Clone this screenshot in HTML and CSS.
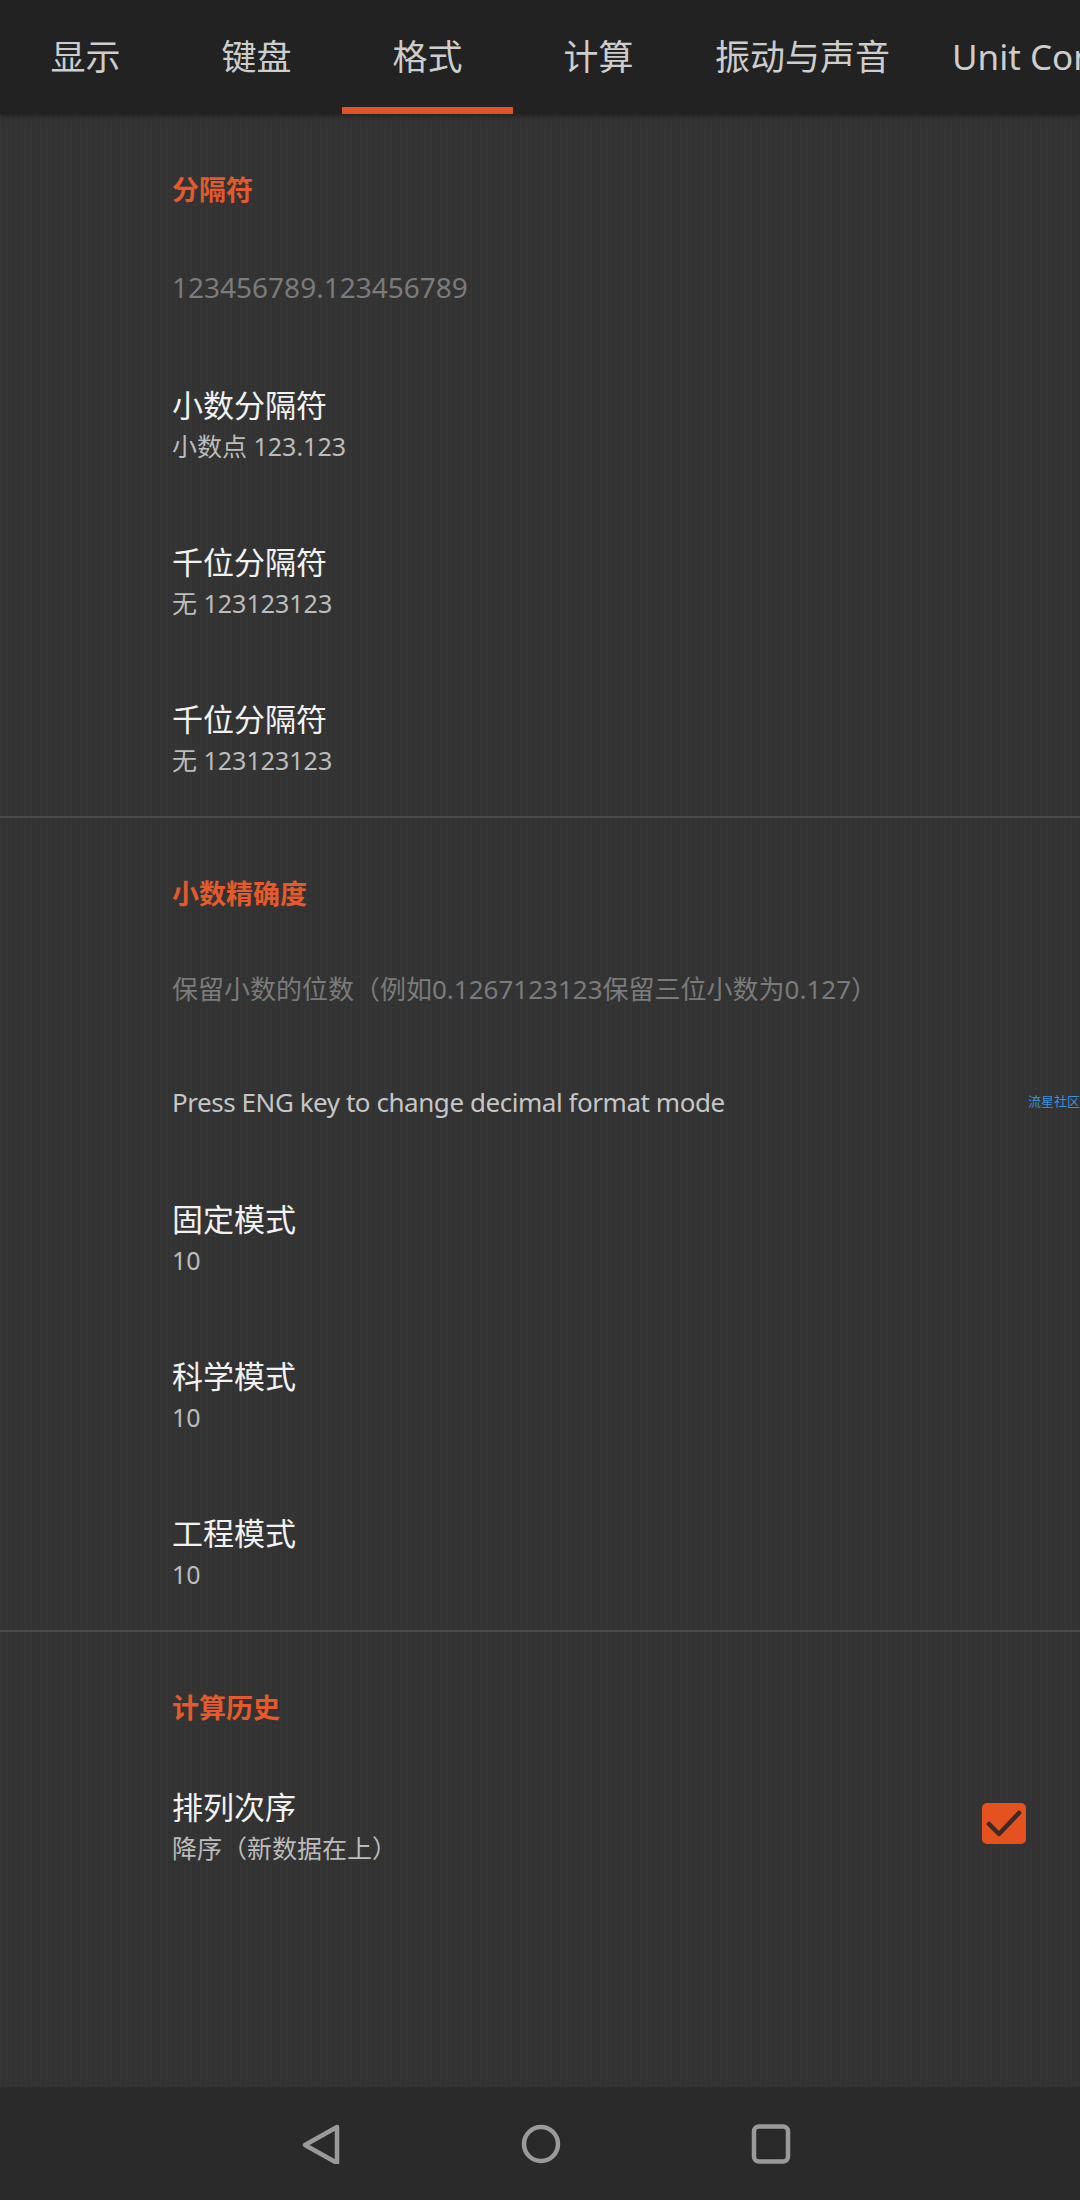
FILE: index.html
```html
<!DOCTYPE html>
<html lang="zh-CN">
  <head>
    <meta charset="utf-8">
    <meta name="viewport" content="width=device-width, initial-scale=1">
    <title>设置 - 格式</title>
    <link rel="stylesheet" href="styles.css">
  </head>
  <body>
    <nav class="tabs">
      <div class="tab">显示</div>
      <div class="tab">键盘</div>
      <div class="tab active">格式</div>
      <div class="tab">计算</div>
      <div class="tab">振动与声音</div>
      <div class="tab">Unit Converter</div>
    </nav>

    <main class="content">
      <section class="group">
        <h2 class="group-title">分隔符</h2>
        <div class="pref single disabled big">123456789.123456789</div>
        <div class="pref">
          <div class="pref-text">
            <div class="pref-title">小数分隔符</div>
            <div class="pref-summary">小数点 123.123</div>
          </div>
        </div>
        <div class="pref">
          <div class="pref-text">
            <div class="pref-title">千位分隔符</div>
            <div class="pref-summary">无 123123123</div>
          </div>
        </div>
        <div class="pref">
          <div class="pref-text">
            <div class="pref-title">千位分隔符</div>
            <div class="pref-summary">无 123123123</div>
          </div>
        </div>
      </section>

      <section class="group">
        <h2 class="group-title">小数精确度</h2>
        <div class="pref single disabled">保留小数的位数（例如0.1267123123保留三位小数为0.127）</div>
        <div class="pref single note">
          Press ENG key to change decimal format mode
          <span class="watermark">流星社区</span>
        </div>
        <div class="pref">
          <div class="pref-text">
            <div class="pref-title">固定模式</div>
            <div class="pref-summary">10</div>
          </div>
        </div>
        <div class="pref">
          <div class="pref-text">
            <div class="pref-title">科学模式</div>
            <div class="pref-summary">10</div>
          </div>
        </div>
        <div class="pref">
          <div class="pref-text">
            <div class="pref-title">工程模式</div>
            <div class="pref-summary">10</div>
          </div>
        </div>
      </section>

      <section class="group">
        <h2 class="group-title">计算历史</h2>
        <div class="pref">
          <div class="pref-text">
            <div class="pref-title">排列次序</div>
            <div class="pref-summary">降序（新数据在上）</div>
          </div>
          <div class="checkbox">
            <svg viewBox="0 0 44 41" width="44" height="41">
              <path d="M7 21 L17 31 L37 10" fill="none" stroke="#3a2b26" stroke-width="4.5" stroke-linecap="round" stroke-linejoin="round"/>
            </svg>
          </div>
        </div>
      </section>
    </main>

    <footer class="navbar">
      <svg class="nav-icon" viewBox="0 0 40 40" width="40" height="40">
        <path d="M36 3 L4 21 L36 39 Z" fill="none" stroke="#9a9a9a" stroke-width="4.5" stroke-linejoin="round"/>
      </svg>
      <svg class="nav-icon" viewBox="0 0 40 40" width="40" height="40">
        <circle cx="20" cy="20" r="17" fill="none" stroke="#9a9a9a" stroke-width="4.5"/>
      </svg>
      <svg class="nav-icon nav-recent" viewBox="0 0 40 40" width="40" height="40">
        <rect x="3" y="2.5" width="34" height="35" rx="5" fill="none" stroke="#9a9a9a" stroke-width="4.5"/>
      </svg>
    </footer>
  </body>
</html>
```

FILE: styles.css
```css
*, *::before, *::after {
  box-sizing: border-box;
  margin: 0;
  padding: 0;
}

html, body {
  width: 100%;
  height: 100%;
}

body {
  display: flex;
  flex-direction: column;
  overflow: hidden;

  background-color: #333333;
  font-family: "Noto Sans", "Noto Sans CJK SC", sans-serif;
  color: #f2f2f2;
}

/* top tabs */

.tabs {
  display: flex;
  flex: 0 0 114px;
  overflow: hidden;

  background-color: #222222;
  box-shadow: 0 2px 5px rgba(0, 0, 0, 0.35);
  position: relative;
  z-index: 1;
}

.tab {
  flex: 0 0 auto;
  display: flex;
  align-items: center;
  justify-content: center;

  min-width: 171px;
  padding: 0 31px;

  font-size: 35px;
  line-height: 40px;
  color: #cdcdcd;
  white-space: nowrap;

  position: relative;
}

.tab.active::after {
  content: '';
  position: absolute;
  left: 0;
  right: 0;
  bottom: 0;
  height: 7px;
  background-color: #e0532a;
}

/* settings list */

.content {
  flex: 1 1 auto;

  background-color: #333333;
  background-image:
    repeating-linear-gradient(90deg, rgba(255, 255, 255, 0.012) 0 2px, transparent 2px 5px),
    repeating-linear-gradient(0deg, rgba(0, 0, 0, 0.03) 0 1px, transparent 1px 4px);
}

.group {
  border-bottom: 2px solid #4b4b4b;
}

.group:last-child {
  border-bottom: none;
}

.group-title {
  padding: 57px 0 20px 172px;

  font-size: 27px;
  line-height: 38px;
  font-weight: 700;
  color: #e35a2c;
}

.pref {
  display: flex;
  align-items: center;
  justify-content: space-between;

  padding: 38px 54px 37px 172px;
  position: relative;
}

.pref-title {
  font-size: 31px;
  line-height: 44px;
  color: #f2f2f2;
}

.pref-summary {
  font-size: 25px;
  line-height: 38px;
  color: #bcbcbc;
}

.pref.single {
  padding-top: 37px;
  padding-bottom: 37px;

  font-size: 26px;
  line-height: 39px;
  white-space: nowrap;
}

.pref.single.big {
  font-size: 28px;
  line-height: 42px;
}

.pref.disabled {
  color: #7b7b7b;
}

.pref.note {
  color: #c6c6c6;
  letter-spacing: -0.45px;
}

.watermark {
  position: absolute;
  left: 1028px;
  top: 48px;

  font-size: 13px;
  line-height: 14px;
  letter-spacing: 0;
  color: #3b8fd8;
  white-space: nowrap;
}

.checkbox {
  flex: 0 0 auto;
  display: flex;

  width: 44px;
  height: 41px;
  margin-top: -5px;

  border-radius: 5px;
  background-color: #e6521f;
}

/* android nav */

.navbar {
  display: flex;
  align-items: center;
  gap: 180px;
  flex: 0 0 113px;

  padding-left: 301px;
  background-color: #2a2a2a;
}

.nav-icon {
  display: block;
}

.nav-recent {
  margin-left: 10px;
}
```
